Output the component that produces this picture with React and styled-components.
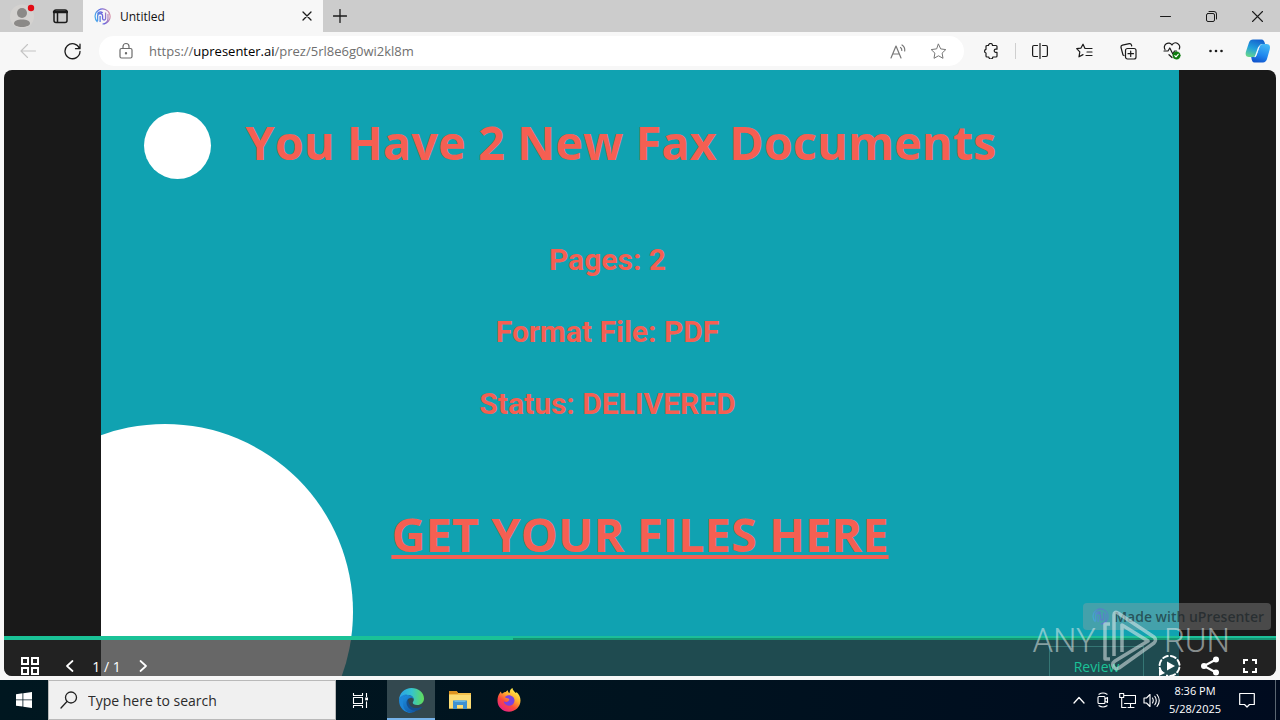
import React from "react";
import styled, { createGlobalStyle, css } from "styled-components";

const Global = createGlobalStyle`
  * { box-sizing: border-box; }
  html, body { margin: 0; height: 100%; }
  body { background: #f7f7f7; font-family: "Open Sans", "Noto Sans", sans-serif; }
  #root { height: 100%; }
  button { font: inherit; color: inherit; border: 0; padding: 0; background: none; }
  svg { display: block; flex: none; }
`;

const Desktop = styled.div`
  display: flex;
  flex-direction: column;
  min-height: 100%;
`;

const IconButton = styled.button`
  display: grid;
  place-items: center;
  flex: none;
  width: ${(p) => p.$w || 44}px;
  height: ${(p) => (p.$h ? p.$h + "px" : "100%")};
  color: ${(p) => p.$color || "#1b1b1b"};
`;

/* ---------- browser chrome ---------- */
const TabBar = styled.header`
  display: flex;
  height: 32px;
  background: #cccccc;
`;
const Tab = styled.div`
  display: flex;
  align-items: center;
  gap: 9px;
  width: 240px;
  margin-left: 7px;
  padding: 0 8px 0 11px;
  background: #f7f7f7;
  font-size: 12px;
  color: #111;
`;
const TabTitle = styled.span`
  flex: 1;
`;
const Spacer = styled.div`
  flex: 1;
`;
const Toolbar = styled.nav`
  display: flex;
  align-items: center;
  height: 38px;
  padding: 0 2px 0 6px;
  background: #f7f7f7;
`;
const Address = styled.div`
  display: flex;
  align-items: center;
  flex: 1;
  height: 30px;
  margin: 0 5px;
  padding: 0 6px 0 18px;
  border-radius: 15px;
  background: #fff;
  color: #6c6c6c;
`;
const Url = styled.a`
  flex: 1;
  margin-left: 14px;
  font-size: 13px;
  color: #6f6f6f;
  text-decoration: none;
  b { font-weight: 400; color: #000; }
`;
const Divider = styled.i`
  width: 1px;
  height: 16px;
  margin: 0 2px;
  background: #cfcfcf;
`;

/* ---------- presentation ---------- */
const Viewer = styled.main`
  position: relative;
  flex: 1;
  display: flex;
  justify-content: center;
  margin: 0 4px 4px;
  border-radius: 8px;
  overflow: hidden;
  background: #191919;
`;
const Slide = styled.section`
  position: relative;
  width: 84.7%;
  overflow: hidden;
  display: flex;
  flex-direction: column;
  background: #10a2b1;
  color: #f55f52;
`;
const BigCircle = styled.div`
  position: absolute;
  left: -124px;
  top: 354px;
  width: 376px;
  height: 376px;
  border-radius: 50%;
  background: #fff;
`;
const SlideHead = styled.div`
  display: flex;
  align-items: flex-start;
  gap: 34px;
  padding: 42px 43px 0;
`;
const Dot = styled.div`
  flex: none;
  width: 67px;
  height: 67px;
  border-radius: 50%;
  background: #fff;
`;
const Title = styled.h1`
  margin: 0;
  font-size: 47px;
  line-height: 60px;
  font-weight: 700;
  white-space: nowrap;
`;
const Facts = styled.div`
  display: flex;
  flex-direction: column;
  align-items: center;
  gap: 36px;
  margin-top: 63px;
  padding-right: 65px;
`;
const Fact = styled.p`
  margin: 0;
  font: 700 30px/36px Roboto, sans-serif;
`;
const FilesLink = styled.a`
  align-self: center;
  margin-top: 80px;
  font-size: 47px;
  line-height: 64px;
  font-weight: 700;
  color: #f55f52;
  text-decoration: underline;
  text-decoration-thickness: 4px;
  text-underline-offset: 3px;
  white-space: nowrap;
`;
const Controls = styled.div`
  position: absolute;
  left: 0;
  right: 0;
  bottom: -16px;
`;
const Progress = styled.div`
  height: 4px;
  background: linear-gradient(#1cbf98 50%, #159472 50%);
`;
const ProgressDone = styled.div`
  width: 40%;
  height: 100%;
  background: #1ac297;
`;
const ControlRow = styled.div`
  display: flex;
  align-items: center;
  height: 52px;
  padding: 0 6px;
  background: rgba(38, 38, 38, 0.7);
  color: #fff;
`;
const PageCount = styled.span`
  width: 33px;
  font-size: 14px;
  text-align: center;
  white-space: nowrap;
`;
const Review = styled.button`
  width: 95px;
  height: 40px;
  margin-right: 6px;
  border: 1px solid rgba(80, 170, 160, 0.45);
  color: #1ac297;
  font-size: 14px;
`;
const MadeWith = styled.a`
  position: absolute;
  right: 5px;
  bottom: 46px;
  display: flex;
  align-items: center;
  gap: 5px;
  height: 27px;
  padding: 0 7px 0 9px;
  border-radius: 4px;
  background: rgba(160, 160, 160, 0.36);
  color: rgba(20, 30, 35, 0.62);
  font-size: 14px;
  font-weight: 600;
  text-decoration: none;
  white-space: nowrap;
`;
const Watermark = styled.div`
  position: absolute;
  right: 46px;
  bottom: 4px;
  display: flex;
  align-items: center;
  gap: 6px;
  color: rgba(225, 235, 235, 0.55);
  font: 300 33px/36px Roboto, sans-serif;
  pointer-events: none;
`;

/* ---------- taskbar ---------- */
const Taskbar = styled.footer`
  display: flex;
  height: 40px;
  background: linear-gradient(90deg, #001720, #00131f 50%, #000b1f);
  color: #fff;
`;
const Search = styled.label`
  display: flex;
  align-items: center;
  gap: 10px;
  width: 288px;
  padding: 0 11px;
  border: 1px solid #b9b9b9;
  background: #f0f0f0;
  color: #222;
`;
const SearchInput = styled.input`
  flex: 1;
  min-width: 0;
  border: 0;
  padding: 0;
  outline: 0;
  background: none;
  font: 400 14px "Open Sans", sans-serif;
  color: #222;
  &::placeholder { color: #2b2b2b; opacity: 1; }
`;
const AppButton = styled.button`
  display: grid;
  place-items: center;
  width: 48px;
  margin-right: 1px;
  ${(p) => p.$active && css`
    margin-left: 3px;
    background: #33484f;
    box-shadow: inset 0 -2px #76b3ea;
  `}
`;
const Clock = styled.time`
  display: flex;
  flex-direction: column;
  align-items: center;
  justify-content: center;
  width: 64px;
  font-size: 11px;
  line-height: 18px;
  white-space: nowrap;
`;
const ShowDesktop = styled.button`
  width: 5px;
  margin-left: 8px;
  border-left: 1px solid #5a6672;
`;

/* ---------- drawings ---------- */
const Line = ({ s = 16, w = 1, box, children, ...rest }) => (
  <svg width={s} height={s} viewBox={`0 0 ${box || s} ${box || s}`} fill="none" stroke="currentColor"
    strokeWidth={w} strokeLinecap="round" strokeLinejoin="round" aria-hidden="true" {...rest}>
    {children}
  </svg>
);

const Logo = ({ id, dim }) => (
  <svg width="17" height="17" viewBox="0 0 17 17" fill="none" stroke={`url(#${id})`} opacity={dim ? 0.6 : 1} aria-hidden="true">
    <defs>
      <linearGradient id={id} x1="0" y1="10" x2="17" y2="6" gradientUnits="userSpaceOnUse">
        <stop stopColor="#3fb4ee" /><stop offset=".5" stopColor="#6a63dd" /><stop offset="1" stopColor={dim ? "#5a7fd0" : "#e59aa5"} />
      </linearGradient>
    </defs>
    <path d="M3.500 14A7.500 7.500 0 1 1 8.500 16c3 0 5.500-2.300 5.500-5.200V6" strokeWidth="1.2" />
    <path d="M3.600 13V8a2.500 2.500 0 0 1 5 0v2.500a1.500 1.500 0 0 0 3 0V4.500M6.100 14V8M8.800 4.800a4.200 4.200 0 0 0-5.500.8" strokeWidth="1.300" />
  </svg>
);

const Profile = () => (
  <svg width="26" height="26" viewBox="0 0 26 26" aria-hidden="true">
    <circle cx="13" cy="13.500" r="12" fill="#d4d2d0" />
    <circle cx="13" cy="10" r="5" fill="#8b8987" />
    <path d="M5 20.500c0-2.600 3.600-4 8-4s8 1.400 8 4c0 1.800-3.600 3.500-8 3.500s-8-1.700-8-3.500z" fill="#8b8987" />
    <circle cx="22" cy="5" r="3.200" fill="#e30b14" />
  </svg>
);

const Copilot = () => (
  <svg width="26" height="24" viewBox="0 0 26 24" aria-hidden="true">
    <defs>
      <linearGradient id="cpA" x1="10" y1="0" x2="4" y2="18" gradientUnits="userSpaceOnUse">
        <stop stopColor="#1565cf" /><stop offset=".5" stopColor="#22a0dc" /><stop offset="1" stopColor="#69d889" />
      </linearGradient>
      <linearGradient id="cpB" x1="22" y1="6" x2="16" y2="24" gradientUnits="userSpaceOnUse">
        <stop stopColor="#45b9f5" /><stop offset=".6" stopColor="#2087ee" /><stop offset="1" stopColor="#1257cf" />
      </linearGradient>
    </defs>
    <path d="M8 .500h8.500c2 0 2.800 1.500 3.600 4.500h-2.800c-2 0-3 1.200-3.700 3.500L11.500 15c-.7 2-1.600 3-3.600 3H4C.6 18 .2 15 1 12.500L4 3.500c.7-2 2-3 4-3z" fill="url(#cpA)" />
    <path d="M18 23.500H9.500c-2 0-2.700-1.700-3.300-5.500h2c2 0 3.200-1 3.900-3.200L14.300 8.500c.7-2.300 1.700-3.500 3.700-3.500h3.500c3.500 0 4 2.800 3.200 5.500L22 20c-.8 2.300-2 3.500-4 3.500z" fill="url(#cpB)" />
    <path d="M14.500 7.500l-3.300 9.500c-.4 1-.9 1.300-1.700 1.300l3.300-9.300c.4-1.100.8-1.500 1.700-1.500z" fill="#f4fbff" />
  </svg>
);

const Edge = () => (
  <svg width="25" height="25" viewBox="0 0 24 24" aria-hidden="true">
    <defs>
      <linearGradient id="edA" x1="1" y1="7" x2="23" y2="8" gradientUnits="userSpaceOnUse">
        <stop stopColor="#2aa4e4" /><stop offset=".5" stopColor="#35c3ce" /><stop offset="1" stopColor="#5edb62" />
      </linearGradient>
      <linearGradient id="edB" x1="2" y1="8" x2="14" y2="24" gradientUnits="userSpaceOnUse">
        <stop stopColor="#1c8fdf" /><stop offset="1" stopColor="#1159a8" />
      </linearGradient>
    </defs>
    <path d="M0 12C0 5 5.500 0 12 0s12 4.500 12 10c0 3.800-2.900 6.300-6.500 6.300-3 0-4.300-1.200-4.300-2.200 0-.8 1-1.200 1-3 0-2.300-2.200-4.500-5.500-4.500C4.500 6.600 0 9 0 12z" fill="url(#edA)" />
    <path d="M0 12c0-3.500 4-6 8-5.700-2.600 1.200-3.800 3.700-3.800 6.600C4.200 18.500 8.500 23 13 24h-1C5.400 24 0 18.800 0 12z" fill="#1c86d8" />
    <path d="M8.700 9.500c-2.200 1.200-3.200 3-2.700 5.700C6.700 19 10.500 22 15 22c3 0 5.300-1.500 6.800-3.400.3-.4 0-.8-.5-.5-1.400.8-3 1.200-4.700 1.200-4.500 0-8.100-3.100-7.900-9.800z" fill="#154f8e" />
    <path d="M3.600 13.500C3.600 9.500 6 6.500 9 6.600c3.300.1 5.200 2.300 5.200 4.500-.8-1.200-2-1.800-3.300-1.600C8 10 6.500 12.500 7.500 16c1.300 4 5 6 9 5.600C13.500 24.500 9 24.300 6.500 21.800 4.500 19.800 3.600 17 3.600 13.500z" fill="url(#edB)" />
  </svg>
);

const Explorer = () => (
  <svg width="22" height="20" viewBox="0 0 22 20" aria-hidden="true">
    <path d="M0 1h7.500l1.500 2h13v15.500H0z" fill="#f3c04b" />
    <path d="M0 1h7.500l1.500 1.500V4H0z" fill="#de9420" />
    <path d="M0 5h22v13.500H0z" fill="#fcdc74" />
    <path d="M4 10.500h14V19h-4v-4H8v4H4z" fill="#3f91d1" />
    <path d="M5.500 10.500h11V12h-11z" fill="#64b6e8" />
  </svg>
);

const Firefox = () => (
  <svg width="24" height="24" viewBox="0 0 24 24" aria-hidden="true">
    <defs>
      <linearGradient id="ffA" x1="19" y1="2" x2="5" y2="22" gradientUnits="userSpaceOnUse">
        <stop stopColor="#fff04a" /><stop offset=".35" stopColor="#ffab2e" /><stop offset=".65" stopColor="#fc4a3c" /><stop offset="1" stopColor="#e72283" />
      </linearGradient>
    </defs>
    <path d="M2.500 5.500C3 4.500 3.500 4 4 3.500c0 1 .3 1.700 1 2.200C6.300 4.500 7.500 4 8.800 4c.5-.8 1.200-1.400 2-1.700 0 1 .3 1.800 1 2.500h1C12.500 3 13.500 1 15.500 0c.2 2.200 1.500 3 3.300 5 .5-.2.600-.6.600-1.100C22 6 23.500 9 23.500 12.500c0 6.300-5.200 11.200-11.500 11.200S.5 19 .5 12.700c0-3 .6-5.200 2-7.200z" fill="url(#ffA)" />
    <path d="M8 9c1.600-1.600 3.800-2.200 6-1.300 2.800 1 4 3.500 3.300 6-.7 2.600-3 4.200-5.600 4-2.700-.1-4.900-2-5-4.400 1.500 1 3.700.8 5-.6 1-1.100.6-2-.6-2.200C10 10.300 8.700 10.300 8 9z" fill="#7a42e0" />
  </svg>
);

const WatermarkMark = () => (
  <svg width="56" height="62" viewBox="0 0 56 62" fill="none" stroke="currentColor" strokeWidth="3.500" strokeLinejoin="round" aria-hidden="true">
    <path d="M8 14H3v35h5M12 46V5q0-4 4-2L52 27q3 3 0 6L17 58q-4 2-6-2-1-3 2-5L46 31 20 15V42" />
  </svg>
);

export default function App() {
  return (
    <>
      <Global />
      <Desktop>
        <TabBar>
          <IconButton aria-label="Profile"><Profile /></IconButton>
          <IconButton $w={32} aria-label="Tab actions">
            <Line w={1.5}><rect x="2" y="2" width="13" height="12.500" rx="2" /><path d="M2 4h13" strokeWidth="2.500" /><path d="M5.500 5v9" /></Line>
          </IconButton>
          <Tab>
            <Logo id="tabLogo" />
            <TabTitle>Untitled</TabTitle>
            <IconButton $w={16} $h={16} aria-label="Close tab"><Line s={10} w={1.3}><path d="M1 1l8 8M9 1l-8 8" /></Line></IconButton>
          </Tab>
          <IconButton $w={34} aria-label="New tab"><Line s={14} w={1.3}><path d="M7 .5v13M.5 7h13" /></Line></IconButton>
          <Spacer />
          <IconButton $w={46} aria-label="Minimize"><Line s={11}><path d="M.5 5.500h10" /></Line></IconButton>
          <IconButton $w={46} aria-label="Restore"><Line s={11}><rect x=".5" y="2.500" width="8" height="8" rx="1.500" /><path d="M3 .5h5a2.500 2.500 0 0 1 2.500 2.500v5" /></Line></IconButton>
          <IconButton $w={46} aria-label="Close"><Line s={11} w={1.1}><path d="M.5.5l10 10M10.500.5l-10 10" /></Line></IconButton>
        </TabBar>

        <Toolbar>
          <IconButton $color="#c4c4c4" aria-label="Back"><Line s={16} w={1.1}><path d="M15.500 8H1M7.500 1.500L1 8l6.500 6.500" /></Line></IconButton>
          <IconButton aria-label="Refresh"><Line s={17} w={1.3}><path d="M15.500 5.500A7.500 7.500 0 1 0 16 8.500M16 1.200v4.500h-4.500" /></Line></IconButton>
          <Address>
            <Line s={18} w={1.2}><rect x="3" y="6.500" width="12" height="9.500" rx="1.500" /><path d="M6 6.500V4.500a3 3 0 0 1 6 0v2" /><circle cx="9" cy="11.300" r=".6" fill="currentColor" /></Line>
            <Url href="https://upresenter.ai/prez/5rl8e6g0wi2kl8m">https://<b>upresenter.ai</b>/prez/5rl8e6g0wi2kl8m</Url>
            <IconButton $w={40} $color="#777" aria-label="Read aloud"><Line s={17} w={1.2}><path d="M1 15L6 3l5 12M2.800 11h6.400M10.500 4.500q1.500 1 1.300 3M12 2q3.200 2 2.700 6" /></Line></IconButton>
            <IconButton $w={40} $color="#777" aria-label="Add to favorites"><Line s={17}><path d="M8.500 1.200l2.200 4.700 5.100.7-3.700 3.500.9 5.200-4.500-2.500L4 15.300l.9-5.200L1.200 6.600l5.100-.7z" /></Line></IconButton>
          </Address>
          <IconButton aria-label="Extensions"><Line s={16} w={1.2}><path d="M5.500 2.500a2 2 0 0 1 4 0H13a1 1 0 0 1 1 1v2.700h-1.200a1.600 1.600 0 0 0 0 3.200H14V13a1 1 0 0 1-1 1H9.800a2 2 0 0 1-4 0H4a1 1 0 0 1-1-1v-3a1.900 1.900 0 0 1 0-3.700V3.500a1 1 0 0 1 1-1z" /></Line></IconButton>
          <Divider />
          <IconButton aria-label="Split screen"><Line s={16} w={1.2}><path d="M8 .5v15M5.500 2.500H2A1.500 1.500 0 0 0 .6 4v8A1.500 1.500 0 0 0 2 13.500h3.500M10.500 2.500H14A1.500 1.500 0 0 1 15.400 4v8a1.500 1.500 0 0 1-1.400 1.500h-3.500" /></Line></IconButton>
          <IconButton aria-label="Favorites"><Line s={17} w={1.2}><path d="M9 5.500h7M9 5.500L7 1.200 5 5.100l-4.300.6 3.100 3.200-.8 4.900L7 11.600M11 9h5M10 12.500h6" /></Line></IconButton>
          <IconButton aria-label="Collections"><Line s={17} w={1.2}><rect x="5.500" y="5.500" width="10.500" height="10.500" rx="2" /><path d="M10.700 8v5.500M8 10.700h5.500M4 12.500l-1-.5L1 4.500a2 2 0 0 1 1.500-2.300l6.800-1.500a2 2 0 0 1 2.200 1.500l.2.800" /></Line></IconButton>
          <IconButton aria-label="Browser essentials">
            <Line s={18} w={1.2}><path d="M9 15.500L6 12.700M2 7.500A4 4 0 0 1 9 3a4 4 0 0 1 7.200 4M1 9h4l1.800-3 3 6 1.700-3h2" /><circle cx="13.500" cy="13.500" r="3.700" fill="#107c10" stroke="#107c10" strokeWidth=".5" /><path d="M11.800 13.600l1.200 1.200 2.200-2.500" stroke="#fff" /></Line>
          </IconButton>
          <IconButton aria-label="Settings and more"><Line s={16}><g fill="currentColor" stroke="none"><circle cx="2.500" cy="8" r="1.300" /><circle cx="8" cy="8" r="1.300" /><circle cx="13.500" cy="8" r="1.300" /></g></Line></IconButton>
          <IconButton $w={40} aria-label="Copilot"><Copilot /></IconButton>
        </Toolbar>

        <Viewer>
          <Slide>
            <BigCircle />
            <SlideHead><Dot /><Title>You Have 2 New Fax Documents</Title></SlideHead>
            <Facts>
              <Fact>Pages: 2</Fact>
              <Fact>Format File: PDF</Fact>
              <Fact>Status: DELIVERED</Fact>
            </Facts>
            <FilesLink href="#files">GET YOUR FILES HERE</FilesLink>
          </Slide>
          <MadeWith href="#upresenter"><Logo id="badgeLogo" dim />Made with uPresenter</MadeWith>
          <Controls>
            <Progress><ProgressDone /></Progress>
            <ControlRow>
              <IconButton $w={40} $color="#fff" aria-label="All slides"><Line s={18} w={2} strokeLinejoin="miter"><rect x="1" y="1" width="6" height="6" /><rect x="11" y="1" width="6" height="6" /><rect x="1" y="11" width="6" height="6" /><rect x="11" y="11" width="6" height="6" /></Line></IconButton>
              <IconButton $w={40} $color="#fff" aria-label="Previous slide"><Line s={12} w={1.7}><path d="M8.500 1L3 6l5.500 5" /></Line></IconButton>
              <PageCount>1 / 1</PageCount>
              <IconButton $w={40} $color="#fff" aria-label="Next slide"><Line s={12} w={1.7}><path d="M3.500 1L9 6l-5.500 5" /></Line></IconButton>
              <Spacer />
              <Review>Review</Review>
              <IconButton $w={40} $color="#fff" aria-label="Autoplay"><Line s={24} w={2}><path d="M4 18.500A10 10 0 1 1 9 21.600" strokeDasharray="5 3" /><path d="M1 15v7l6-3z" fill="currentColor" stroke="none" /><path d="M9 7.500v9l8-4.500z" fill="currentColor" stroke="none" /></Line></IconButton>
              <IconButton $w={40} $color="#fff" aria-label="Share"><Line s={20} w={2}><path d="M16 3.500L4 10l12 6.500" /><g fill="currentColor" stroke="none"><circle cx="16" cy="3.500" r="3" /><circle cx="4" cy="10" r="3" /><circle cx="16" cy="16.500" r="3" /></g></Line></IconButton>
              <IconButton $w={40} $color="#fff" aria-label="Full screen"><Line s={16} w={2} strokeLinecap="butt" strokeLinejoin="miter"><path d="M2 6V2h4M10 2h4v4M14 10v4h-4M6 14H2v-4" /></Line></IconButton>
            </ControlRow>
          </Controls>
          <Watermark><span>ANY</span><WatermarkMark /><span>RUN</span></Watermark>
        </Viewer>

        <Taskbar>
          <IconButton $w={48} $color="#fff" aria-label="Start">
            <svg width="16" height="16" viewBox="0 0 16 16" fill="currentColor" aria-hidden="true"><path d="M0 2.300L6.500 1.300v6.200H0zM7.300 1.200L16 0v7.500H7.300zM0 8.300h6.500v6.300L0 13.700zM7.300 8.300H16V16l-8.700-1.200z" /></svg>
          </IconButton>
          <Search>
            <Line s={18} w={1.3}><circle cx="11" cy="6.500" r="5.500" /><path d="M7 10.500L1 17" /></Line>
            <SearchInput aria-label="Search" placeholder="Type here to search" />
          </Search>
          <IconButton $w={48} $color="#fff" aria-label="Task view"><Line s={17} w={1.1} strokeLinecap="butt"><path d="M1.500 1v2.500h9V1M1.500 16v-2.500h9V16M1.500 5.500h9v6h-9zM14.500 1v4M14.500 9.500V16" /><path d="M13.200 5.500h2.800v2.800h-2.800z" fill="currentColor" stroke="none" /></Line></IconButton>
          <AppButton $active aria-label="Microsoft Edge"><Edge /></AppButton>
          <AppButton aria-label="File Explorer"><Explorer /></AppButton>
          <AppButton aria-label="Firefox"><Firefox /></AppButton>
          <Spacer />
          <IconButton $w={24} $color="#fff" aria-label="Hidden icons"><Line s={12} w={1.3}><path d="M1 9l5-5.500L11 9" /></Line></IconButton>
          <IconButton $w={24} $color="#fff" aria-label="Camera"><Line s={16} w={1.1}><rect x="3" y="4.500" width="7" height="7" rx="1" /><path d="M10 7l2.500-1.500v5L10 9M4 2.300q4-2.500 8 0M4 13.700q4 2.500 8 0" /></Line></IconButton>
          <IconButton $w={24} $color="#fff" aria-label="Network"><Line s={17} w={1.1}><path d="M5.500 3.500h11v8h-11M9 15.500h6M11.500 11.500v4M.7 1.500h4v4h-4zM2.700 5.500v10H7" /></Line></IconButton>
          <IconButton $w={24} $color="#fff" aria-label="Volume"><Line s={17} w={1.1}><path d="M1 6h2.500L7 2.500v12L3.500 11H1zM9.500 6q1.500 2.500 0 5M11.800 4.300q3 4.200 0 8.400M14 2.500q4.500 6 0 12" /></Line></IconButton>
          <Clock><span>8:36 PM</span><span>5/28/2025</span></Clock>
          <IconButton $w={40} $color="#fff" aria-label="Notifications"><Line s={16} w={1.2}><path d="M.7 1.500h14.600v11H10.500L8 15l-2.500-2.500H.7z" /></Line></IconButton>
          <ShowDesktop aria-label="Show desktop" />
        </Taskbar>
      </Desktop>
    </>
  );
}
